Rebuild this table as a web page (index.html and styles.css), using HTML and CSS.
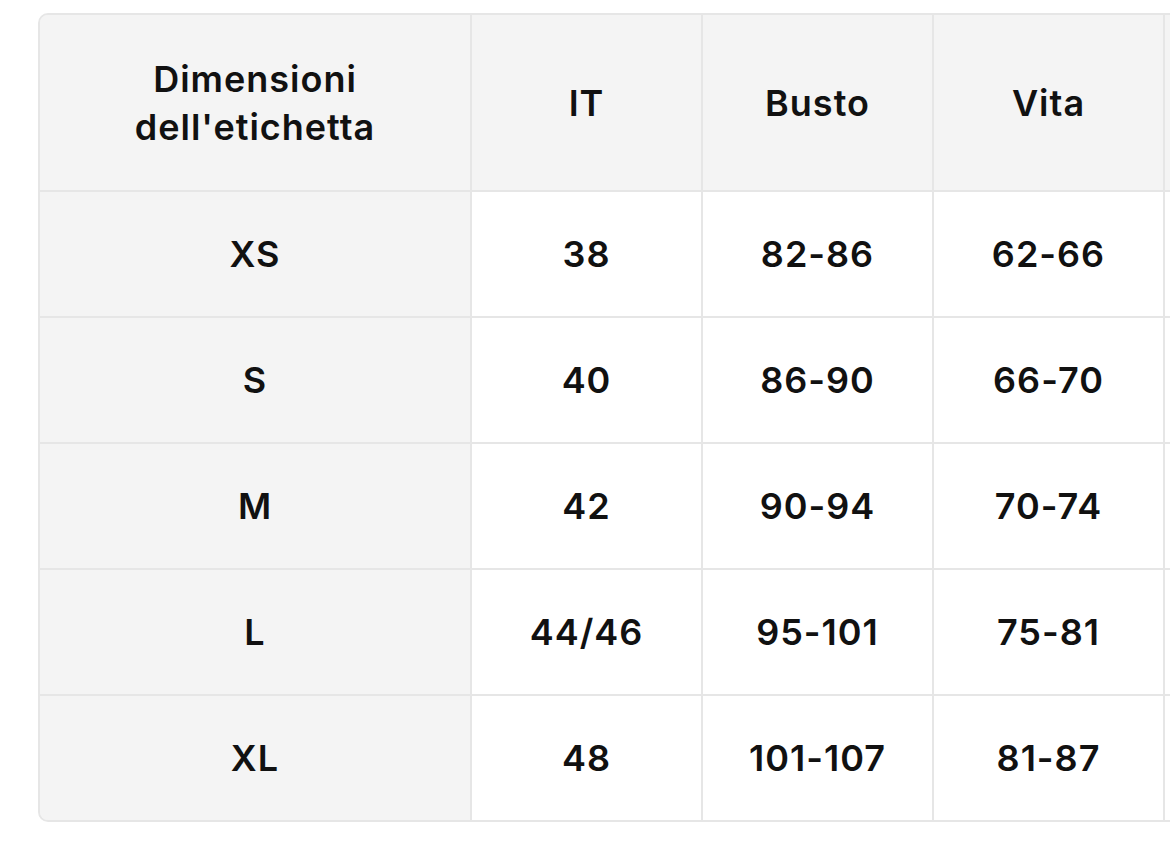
FILE: index.html
```html
<!DOCTYPE html>
<html lang="it">
<head>
<meta charset="utf-8">
<title>Tabella taglie</title>
<link rel="stylesheet" href="styles.css">
</head>
<body>
<div class="wrap">
  <table class="sizes">
    <thead>
      <tr>
        <th class="label">Dimensioni<br>dell'etichetta</th>
        <th>IT</th>
        <th>Busto</th>
        <th>Vita</th>
        <th class="more"></th>
      </tr>
    </thead>
    <tbody>
      <tr><th class="label">XS</th><td>38</td><td>82-86</td><td>62-66</td><td class="more"></td></tr>
      <tr><th class="label">S</th><td>40</td><td>86-90</td><td>66-70</td><td class="more"></td></tr>
      <tr><th class="label">M</th><td>42</td><td>90-94</td><td>70-74</td><td class="more"></td></tr>
      <tr><th class="label">L</th><td>44/46</td><td>95-101</td><td>75-81</td><td class="more"></td></tr>
      <tr><th class="label">XL</th><td>48</td><td>101-107</td><td>81-87</td><td class="more"></td></tr>
    </tbody>
  </table>
</div>
</body>
</html>
```

FILE: styles.css
```css
html, body {
  margin: 0;
  padding: 0;
  background: #ffffff;
  overflow: hidden;
}
body {
  font-family: Inter, "Noto Sans", "Liberation Sans", sans-serif;
  color: #111111;
  width: 1170px;
  height: 855px;
}
.wrap {
  margin: 13px 0 0 38px;
  width: 1400px;
  border: 2px solid #e6e6e6;
  border-radius: 10px;
  overflow: hidden;
  background: #f4f4f4;
}
.sizes {
  border-collapse: collapse;
  table-layout: fixed;
}
.sizes th, .sizes td {
  font-weight: 600;
  font-size: 36px;
  letter-spacing: 1px;
  line-height: 48px;
  text-align: center;
  vertical-align: middle;
  width: 229px;
  height: 124px;
  padding: 0;
  border-right: 2px solid #e6e6e6;
  border-bottom: 2px solid #e6e6e6;
  background: #ffffff;
}
.sizes thead th {
  height: 175px;
  background: #f4f4f4;
}
.sizes th.label {
  width: 430px;
  background: #f4f4f4;
}
.sizes tbody tr:last-child th,
.sizes tbody tr:last-child td {
  border-bottom: none;
}
```
